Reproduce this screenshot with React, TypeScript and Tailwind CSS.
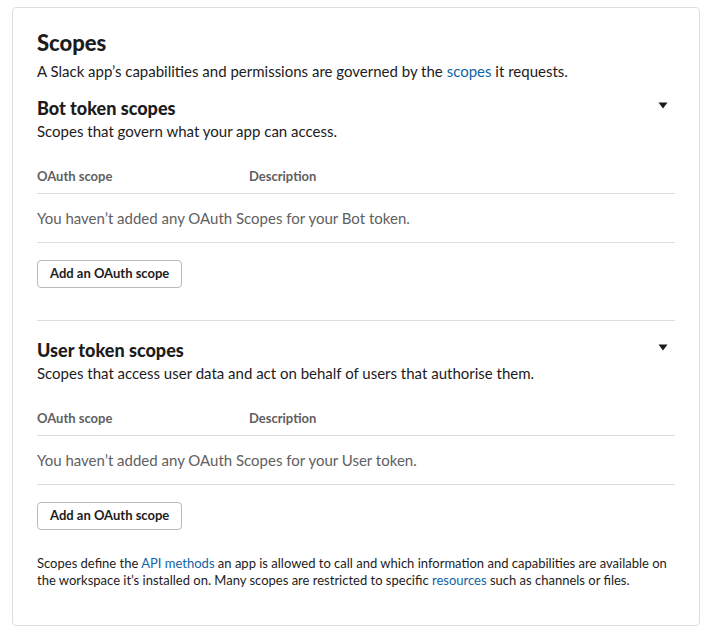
import { useState } from "react";

type Section = {
  key: string;
  title: string;
  blurb: string;
  empty: string;
};

const sections: Section[] = [
  {
    key: "bot",
    title: "Bot token scopes",
    blurb: "Scopes that govern what your app can access.",
    empty: "You haven’t added any OAuth Scopes for your Bot token.",
  },
  {
    key: "user",
    title: "User token scopes",
    blurb: "Scopes that access user data and act on behalf of users that authorise them.",
    empty: "You haven’t added any OAuth Scopes for your User token.",
  },
];

function Caret() {
  return (
    <svg width="10" height="7" viewBox="0 0 10 7" className="mr-[7px] mt-[2px]">
      <path d="M0.5 0.5h9L5 6.5z" fill="#1d1c1d" />
    </svg>
  );
}

function ScopeSection({ s }: { s: Section }) {
  const [open, setOpen] = useState(true);
  return (
    <div>
      <div className="flex items-start justify-between">
        <h3 className="text-[18px] font-black leading-[26px] text-[#1d1c1d]">{s.title}</h3>
        <button onClick={() => setOpen((v) => !v)} className="mt-[5px]">
          <Caret />
        </button>
      </div>
      <p className="text-[15px] leading-[20px] text-[#1d1c1d]">{s.blurb}</p>
      {open && (
        <>
          <div className="mt-[26px] flex border-b border-[#dddddd] pb-[8px] text-[13px] font-bold leading-[18px] text-[#616061]">
            <span className="w-[212px]">OAuth scope</span>
            <span>Description</span>
          </div>
          <div className="border-b border-[#dddddd] py-[13px] text-[15px] leading-[22px] text-[#616061]">
            {s.empty}
          </div>
          <button className="mt-[17px] h-[28px] rounded-[4px] border border-[#b9b9b9] px-[12px] text-[13px] font-bold text-[#1d1c1d]">
            Add an OAuth scope
          </button>
        </>
      )}
    </div>
  );
}

export default function App() {
  return (
    <div className="min-h-[637px] bg-white pt-[7px] font-['Lato','Liberation_Sans',sans-serif]">
      <div className="mx-[12px] w-[688px] rounded-[4px] border border-[#dddddd] px-[24px] pb-[36px] pt-[20px]">
        <h2 className="text-[22px] font-black leading-[30px] text-[#1d1c1d]">Scopes</h2>
        <p className="mt-[2px] text-[15px] leading-[22px] text-[#1d1c1d]">
          A Slack app’s capabilities and permissions are governed by the{" "}
          <a className="text-[#1264a3]">scopes</a> it requests.
        </p>
        <div className="mt-[13px]">
          <ScopeSection s={sections[0]} />
        </div>
        <div className="mt-[32px] border-t border-[#dddddd] pt-[16px]">
          <ScopeSection s={sections[1]} />
        </div>
        <p className="mt-[25px] text-[13px] leading-[17px] text-[#1d1c1d]">
          Scopes define the <a className="text-[#1264a3]">API methods</a> an app is allowed to call and which
          information and capabilities are available on the workspace it’s installed on. Many scopes are
          restricted to specific <a className="text-[#1264a3]">resources</a> such as channels or files.
        </p>
      </div>
    </div>
  );
}
